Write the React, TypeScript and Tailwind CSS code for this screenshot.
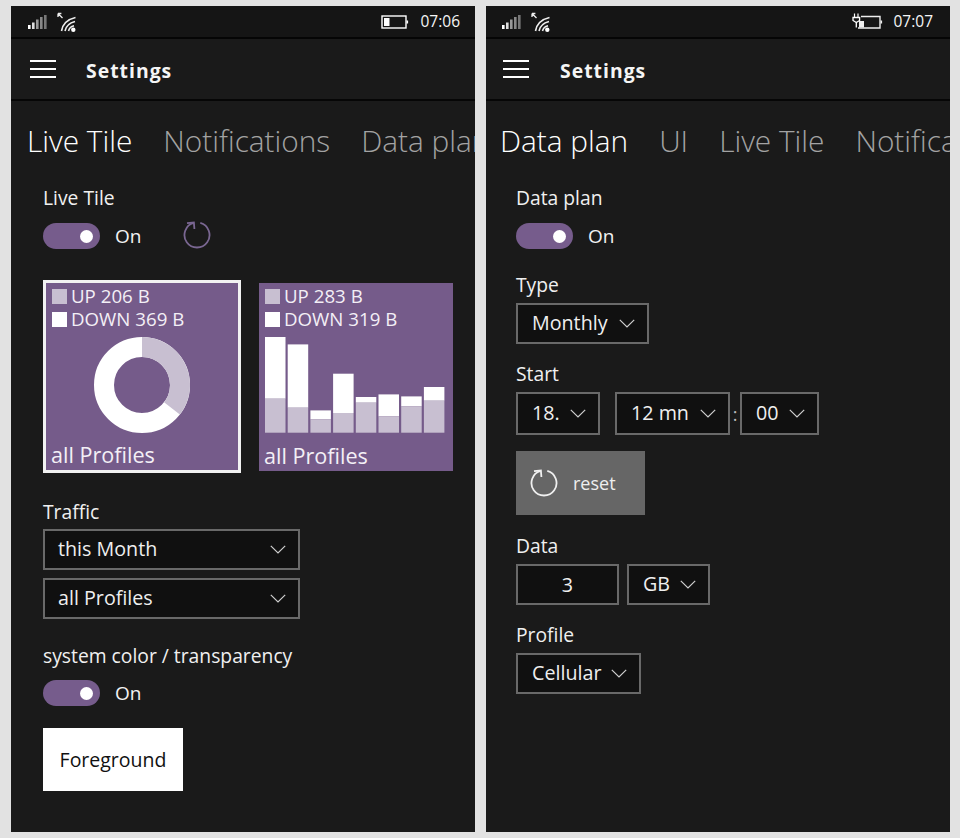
import React from "react";

const Font = '[font-family:"Open_Sans","Noto_Sans",sans-serif]';

function Signal() {
  return (
    <svg width="20" height="16" viewBox="0 0 20 16" className="shrink-0">
      <rect x="0" y="11" width="2.6" height="4" fill="#fff" />
      <rect x="4" y="8.5" width="2.6" height="6.5" fill="#ddd" />
      <rect x="8" y="5.5" width="2.6" height="9.5" fill="#999" />
      <rect x="12" y="3" width="2.6" height="12" fill="#888" />
      <rect x="16" y="1" width="2.6" height="14" fill="#777" />
    </svg>
  );
}

function Wifi() {
  return (
    <svg width="22" height="22" viewBox="0 0 22 22" className="shrink-0">
      <path d="M2 2.5 L6.5 7 M2 2.5 h3.4 M2 2.5 v3.4" stroke="#eee" strokeWidth="1.3" fill="none" />
      <g fill="none" stroke="#eee" strokeWidth="1.6">
        <path d="M5.5 20 C6.5 14 11 8.5 19.5 6.5" />
        <path d="M9 20 C9.8 16 13 12 19 10.5" />
        <path d="M12.5 20 C13 18 15 15.5 18 14.8" />
      </g>
      <circle cx="17.3" cy="18.8" r="2.2" fill="#fff" />
    </svg>
  );
}

function Battery({ plug }: { plug?: boolean }) {
  return (
    <svg width={plug ? 31 : 28} height="18" viewBox={plug ? "0 0 31 18" : "0 0 28 18"} className="shrink-0">
      {plug ? (
        <g>
          <path d="M6 15 H28 V3.5 H9" fill="none" stroke="#eee" strokeWidth="1.4" />
          <rect x="28.5" y="7.5" width="1.6" height="3" fill="#eee" />
          <rect x="7" y="8" width="5" height="6.5" fill="#eee" />
          <path d="M2.5 0.5 V4 M6 0.5 V4" stroke="#fff" strokeWidth="1.2" />
          <path d="M1 4.5 H7.6 V7.5 L4.3 9.5 L1 7.5 Z" fill="none" stroke="#fff" strokeWidth="1.3" />
          <path d="M4.3 9.5 V14.5" stroke="#fff" strokeWidth="1.3" />
        </g>
      ) : (
        <g>
          <rect x="1" y="3" width="24" height="12" fill="none" stroke="#fff" strokeWidth="1.4" />
          <rect x="3" y="5" width="5.5" height="8" fill="#fff" />
          <rect x="25.5" y="7.5" width="1.6" height="3" fill="#fff" />
        </g>
      )}
    </svg>
  );
}

function Refresh({ color, size, w = 1.8 }: { color: string; size: number; w?: number }) {
  return (
    <svg width={size} height={size} viewBox="0 0 28 28" className="shrink-0">
      <path d="M17.3 1.94 A12.5 12.5 0 1 1 10.7 1.94" fill="none" stroke={color} strokeWidth={w} />
      <path d="M4 2.2 L10.9 1.6 L11.4 8" fill="none" stroke={color} strokeWidth={w} />
    </svg>
  );
}

function Chevron() {
  return (
    <svg width="16" height="9" viewBox="0 0 16 9" className="shrink-0">
      <path d="M0.8 0.8 L8 8 L15.2 0.8" fill="none" stroke="#cfcfcf" strokeWidth="1.2" />
    </svg>
  );
}

function Toggle() {
  return (
    <div className="flex items-center h-[26px]">
      <div className="w-[57px] h-[26px] rounded-full bg-[#765c8c] flex items-center justify-end pr-[7px]">
        <div className="w-[13px] h-[13px] rounded-full bg-white" />
      </div>
      <span className="ml-[15px] text-[19px] leading-[26px] text-[#f2f2f2]">On</span>
    </div>
  );
}

function Label({ children, className }: { children: React.ReactNode; className: string }) {
  return <div className={`h-[24px] text-[19.3px] leading-[24px] text-[#f0f0f0] ${className}`}>{children}</div>;
}

function Select({ text, w, h, mt, tight }: { text: string; w: string; h: string; mt?: string; tight?: boolean }) {
  return (
    <div className={`${w} ${h} ${mt ?? ""} ${tight ? "pl-[13px]" : "pl-[14px]"} border-2 border-[#696969] bg-[#101010] flex items-center justify-between pr-[12px]`}>
      <span className="text-[19.7px] text-[#efefef] whitespace-nowrap leading-none pb-[1px]">{text}</span>
      <Chevron />
    </div>
  );
}

function Shell({ children, time, plug, tabs, pl, tabPl }: { children: React.ReactNode; time: string; plug?: boolean; tabs: string[]; pl: string; tabPl: string }) {
  return (
    <div className="w-[464px] h-[826px] bg-[#1a1a1a] flex flex-col overflow-hidden shrink-0">
      <div className={`h-[33px] bg-[#151515] border-b-2 border-[#050505] flex items-center justify-between ${plug ? "pl-[16px] pr-[17px]" : "pl-[17px] pr-[15px]"}`}>
        <div className="flex items-center gap-[8px]">
          <Signal />
          <Wifi />
        </div>
        <div className={`flex items-center ${plug ? "gap-[10px]" : "gap-[11px]"}`}>
          <Battery plug={plug} />
          <span className="text-[15.5px] text-[#f5f5f5] leading-none">{time}</span>
        </div>
      </div>
      <div className={`h-[62px] border-b-2 border-[#060606] flex items-center ${plug ? "pl-[17px]" : "pl-[19px]"}`}>
        <div className="w-[26px] flex flex-col gap-[6px]">
          <div className="h-[2px] bg-white" />
          <div className="h-[2px] bg-white" />
          <div className="h-[2px] bg-white" />
        </div>
        <span className={`${plug ? "ml-[31px]" : "ml-[30px]"} pt-[3px] text-[19.4px] font-bold tracking-[1px] text-[#f5f5f5] leading-none`}>Settings</span>
      </div>
      <div className={`pt-[19px] h-[62px] ${tabPl} flex gap-[31px] whitespace-nowrap overflow-hidden text-[29.8px] leading-[42px] font-light`}>
        {tabs.map((t, i) => (
          <span key={t} className={i === 0 ? "text-white" : "text-[#a3a3a3]"}>{t}</span>
        ))}
      </div>
      <div className={`${pl} flex flex-col items-start`}>{children}</div>
    </div>
  );
}

function Legend({ up, down }: { up: string; down: string }) {
  return (
    <div className="flex flex-col gap-[8px]">
      <div className="flex items-center gap-[4px] h-[15px]">
        <div className="w-[15px] h-[15px] bg-[#c8bfd1]" />
        <span className="text-[18.7px] leading-none text-[#f3eff6] whitespace-nowrap">UP {up} B</span>
      </div>
      <div className="flex items-center gap-[4px] h-[15px]">
        <div className="w-[15px] h-[15px] bg-white" />
        <span className="text-[18.7px] leading-none text-[#f3eff6] whitespace-nowrap">DOWN {down} B</span>
      </div>
    </div>
  );
}

function Donut() {
  const R = 38;
  const a = (128 * Math.PI) / 180;
  const x = 48 + R * Math.sin(a);
  const y = 48 - R * Math.cos(a);
  return (
    <svg width="96" height="96" viewBox="0 0 96 96" className="block">
      <circle cx="48" cy="48" r={R} fill="none" stroke="#fff" strokeWidth="20" />
      <path d={`M48 10 A${R} ${R} 0 0 1 ${x} ${y}`} fill="none" stroke="#c8bfd1" strokeWidth="20" />
    </svg>
  );
}

const bars = [
  [95.7, 34],
  [88.3, 25],
  [22.3, 13.3],
  [59, 19.7],
  [35.7, 30],
  [38.3, 16.3],
  [36.3, 26.3],
  [45.7, 32],
];

function Bars() {
  return (
    <svg width="180" height="96" viewBox="0 0 180 96" className="block">
      {bars.map(([t, l], i) => (
        <g key={i}>
          <rect x={i * 22.7} y={95.7 - t} width="20.5" height={t - l} fill="#fff" />
          <rect x={i * 22.7} y={95.7 - l} width="20.5" height={l} fill="#c8bfd1" />
        </g>
      ))}
    </svg>
  );
}

function Left() {
  return (
    <Shell time="07:06" tabs={["Live Tile", "Notifications", "Data plan"]} pl="pl-[32px]" tabPl="pl-[16px]">
      <Label className="mt-[23px]">Live Tile</Label>
      <div className="mt-[13px] flex items-center h-[26px]">
        <Toggle />
        <div className="ml-[42px] mb-[2px]">
          <Refresh color="#7a6792" size={28} />
        </div>
      </div>
      <div className="mt-[31px] flex items-center gap-[18px]">
        <div className="w-[198px] h-[193px] border-[3px] border-[#f2f2f2] bg-[#755b8a] flex flex-col pl-[6px] pt-[6px]">
          <Legend up="206" down="369" />
          <div className="self-center -ml-[6px] mt-[10px]">
            <Donut />
          </div>
          <div className="mt-[7px] -ml-[1px] text-[21.6px] leading-[30px] text-[#f3eff6]">all Profiles</div>
        </div>
        <div className="w-[194px] h-[188px] bg-[#755b8a] flex flex-col pl-[6px] pt-[6px]">
          <Legend up="283" down="319" />
          <div className="mt-[10px]">
            <Bars />
          </div>
          <div className="mt-[8px] -ml-[1px] text-[21.6px] leading-[30px] text-[#f3eff6]">all Profiles</div>
        </div>
      </div>
      <Label className="mt-[27px]">Traffic</Label>
      <Select tight text="this Month" w="w-[257px]" h="h-[41px]" mt="mt-[5px]" />
      <Select tight text="all Profiles" w="w-[257px]" h="h-[41px]" mt="mt-[8px]" />
      <Label className="mt-[25px]">system color / transparency</Label>
      <div className="mt-[12px]">
        <Toggle />
      </div>
      <div className="mt-[22px] w-[140px] h-[63px] bg-white flex items-center justify-center text-[19.5px] text-[#111]">
        Foreground
      </div>
    </Shell>
  );
}

function Right() {
  return (
    <Shell time="07:07" plug tabs={["Data plan", "UI", "Live Tile", "Notifications"]} pl="pl-[30px]" tabPl="pl-[14px]">
      <Label className="mt-[23px]">Data plan</Label>
      <div className="mt-[13px]">
        <Toggle />
      </div>
      <Label className="mt-[24px]">Type</Label>
      <Select text="Monthly" w="w-[133px]" h="h-[41px]" mt="mt-[6px]" />
      <Label className="mt-[18px]">Start</Label>
      <div className="mt-[6px] flex items-center">
        <Select text="18." w="w-[84px]" h="h-[43px]" />
        <Select text="12 mn" w="w-[115px] ml-[15px]" h="h-[43px]" />
        <span className="w-[10px] text-center text-[18px] text-[#bbb] leading-none">:</span>
        <Select text="00" w="w-[79px]" h="h-[43px]" />
      </div>
      <div className="mt-[16px] w-[129px] h-[64px] bg-[#666666] flex items-center pl-[14px] gap-[15px]">
        <Refresh color="#f0f0f0" size={28} />
        <span className="text-[18px] text-[#eeeeee] leading-none">reset</span>
      </div>
      <Label className="mt-[19px]">Data</Label>
      <div className="mt-[6px] flex items-center gap-[8px]">
        <div className="w-[103px] h-[41px] border-2 border-[#696969] bg-[#101010] flex items-center justify-center text-[19.7px] text-[#efefef]">3</div>
        <Select text="GB" w="w-[83px]" h="h-[41px]" />
      </div>
      <Label className="mt-[18px]">Profile</Label>
      <Select text="Cellular" w="w-[125px]" h="h-[41px]" mt="mt-[6px]" />
    </Shell>
  );
}

export default function App() {
  return (
    <div className={`w-[960px] h-[838px] bg-[#e2e2e2] flex gap-[11px] pl-[11px] pt-[6px] overflow-hidden ${Font}`}>
      <Left />
      <Right />
    </div>
  );
}
